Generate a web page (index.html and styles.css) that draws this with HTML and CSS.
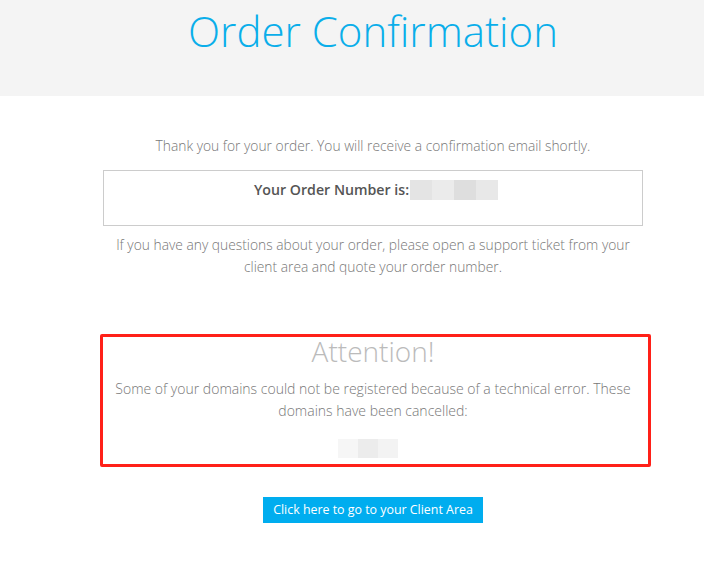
FILE: index.html
```html
<!DOCTYPE html>
<html lang="en">
<head>
    <meta charset="UTF-8">
    <title>Order Confirmation</title>
    <link rel="stylesheet" href="styles.css">
</head>
<body>

<div class="header">
    <h1>Order Confirmation</h1>
</div>

<div class="main">
    <div class="content">
        <p class="thanks">Thank you for your order. You will receive a confirmation email shortly.</p>

        <div class="order-box">
            <strong>Your Order Number is:</strong><span class="blur blur-order"><i class="b1"></i><i class="b2"></i><i class="b3"></i><i class="b4"></i></span>
        </div>

        <p class="help">If you have any questions about your order, please open a support ticket from your client area and quote your order number.</p>

        <div class="attention">
            <h2>Attention!</h2>
            <p>Some of your domains could not be registered because of a technical error. These domains have been cancelled:</p>
            <span class="blur blur-domain"><i class="b1"></i><i class="b3"></i><i class="b2"></i></span>
        </div>

        <div class="actions">
            <a href="#" class="btn">Click here to go to your Client Area</a>
        </div>
    </div>
</div>

</body>
</html>
```

FILE: styles.css
```css
body {
    margin: 0;
    font-family: "Open Sans", Arial, sans-serif;
    font-weight: 300;
    color: #777;
    background: #fff;
}
.header {
    background-color: #f4f4f4;
    height: 96px;
    display: flex;
    justify-content: center;
    padding-left: 42px;
}
.header h1 {
    margin: 6px 0 0;
    font-size: 42px;
    font-weight: 300;
    color: #0aaeea;
    line-height: 50px;
}
.main {
    display: flex;
    padding-left: 97px;
}
.content {
    width: 552px;
    text-align: center;
    font-size: 13.8px;
    line-height: 22px;
}
.thanks {
    margin: 39px 0 13px;
}
.order-box {
    margin: 0 6px;
    border: 1px solid #ccc;
    height: 56px;
    padding-top: 8px;
    padding-left: 6px;
    box-sizing: border-box;
}
.order-box strong {
    font-weight: 600;
    font-size: 14.2px;
    color: #555;
    vertical-align: top;
}
.blur {
    display: inline-flex;
    vertical-align: top;
}
.blur i {
    display: block;
    height: 20px;
    width: 22px;
}
.blur-order {
    margin-top: 1px;
    margin-left: 1px;
}
.b1 { background: #e4e4e4; }
.b2 { background: #ebebeb; }
.b3 { background: #dedede; }
.b4 { background: #e8e8e8; }
.blur-domain {
    margin-right: 11px;
}
.blur-domain i {
    width: 20px;
    height: 19px;
}
.blur-domain .b1 { background: #f6f6f6; }
.blur-domain .b3 { background: #ececec; }
.blur-domain .b2 { background: #f3f3f3; }
.help {
    margin: 8px 10px 0;
}
.attention {
    margin: 56px -2px 0 3px;
    border: 3px solid #ff2018;
    border-radius: 2px;
    height: 133px;
    box-sizing: border-box;
    padding: 0 13px 0 8px;
}
.attention h2 {
    margin: 0;
    font-size: 28px;
    font-weight: 300;
    color: #bbb;
    line-height: 29px;
}
.attention p {
    margin: 12px 0 17px;
    font-size: 14px;
}
.actions {
    margin-top: 30px;
}
.btn {
    display: inline-block;
    background-color: #00adef;
    color: #fff;
    font-size: 12.4px;
    font-weight: 400;
    text-decoration: none;
    padding: 3px 10px;
    line-height: 20px;
}
```
